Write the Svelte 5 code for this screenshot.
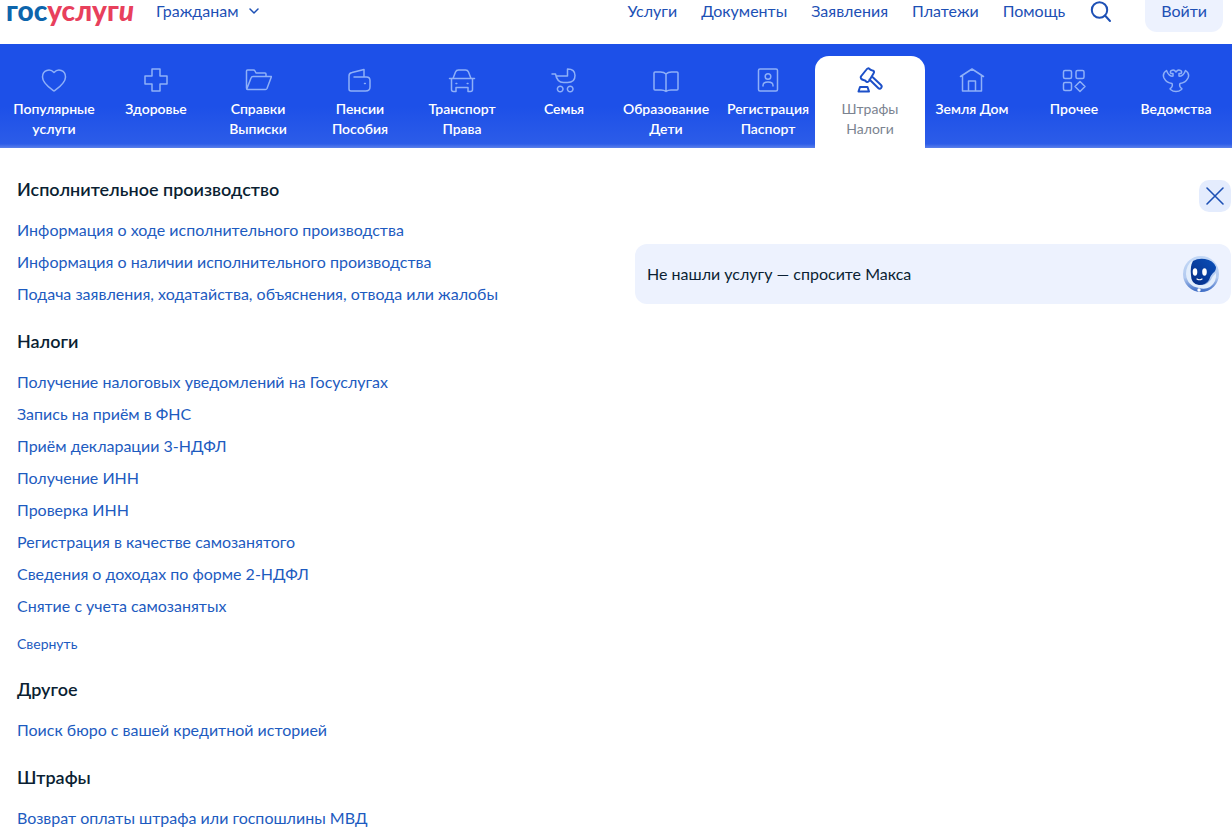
<script>
  const topLinks = ['Услуги', 'Документы', 'Заявления', 'Платежи', 'Помощь'];

  const categories = [
    { icon: 'heart', lines: ['Популярные', 'услуги'] },
    { icon: 'cross', lines: ['Здоровье'] },
    { icon: 'folder', lines: ['Справки', 'Выписки'] },
    { icon: 'wallet', lines: ['Пенсии', 'Пособия'] },
    { icon: 'car', lines: ['Транспорт', 'Права'] },
    { icon: 'stroller', lines: ['Семья'] },
    { icon: 'book', lines: ['Образование', 'Дети'] },
    { icon: 'passport', lines: ['Регистрация', 'Паспорт'] },
    { icon: 'gavel', lines: ['Штрафы', 'Налоги'] },
    { icon: 'house', lines: ['Земля Дом'] },
    { icon: 'grid', lines: ['Прочее'] },
    { icon: 'eagle', lines: ['Ведомства'] }
  ];

  const icons = {
    heart: 'M14 25C10 22 2.500 17.500 2.500 11C2.500 4 10 2 14 6.500C18 2 25.500 4 25.500 11C25.500 17.500 18 22 14 25Z',
    cross: 'M10 3h8v7h7v8h-7v7h-8v-7H3v-8h7z',
    folder: 'M2.500 22V5q0-1 1-1h6q1 0 1.500 1l1 2h9q1 0 1 1V10.500M3 22.500L7 12q.5-1.500 2-1.500h18.500l-4.500 12q-.5 1-1.500 1H3.500q-1 0-1-1.500',
    wallet: 'M3 10v13q0 2 2 2h14.500Q24 25 24 21v-6.500Q24 11 20.500 11H8M3 10q0-3 3-3.500L18 3.500v7M18.500 17.500h.8',
    car: 'M5 12.500L7.500 6q.8-2 3-2h7q2.200 0 3 2l2.500 6.500M1.500 12.500h25M3.500 12.500v11q0 2 2 2h2.500v-4h12v4h2.500q2 0 2-2v-11M8 17.500h.8M19.200 17.500h.8',
    stroller: 'M2 8h3.500q1.500 8.500 8 8.500h4q7.500 0 7.500-7q0-6.500-7.500-6.500v7H6M13 23a2.800 2.800 0 1 1-5.600 0a2.800 2.800 0 1 1 5.600 0M23 23a2.800 2.800 0 1 1-5.600 0a2.800 2.800 0 1 1 5.600 0',
    book: 'M14 8Q12 6 8.500 6H3Q2 6 2 7v16q0 1 1 1h6q3 0 5 1.500Q16 24 19 24h6q1 0 1-1V7q0-1-1-1h-5.500Q16 6 14 8v17.500',
    passport: 'M6 3h16q1.500 0 1.500 1.500v19q0 1.500-1.500 1.500H6q-1.500 0-1.500-1.500v-19Q4.500 3 6 3zM16.800 10.500a2.800 2.800 0 1 1-5.600 0a2.800 2.800 0 1 1 5.600 0M9 20v-.5q0-3.500 5-3.500t5 3.500v.5',
    gavel: 'M10.500 3.500q1.500-2 3-.5q1 1 3 1.500q2.500.5 1 3L13 15q-1 1.500-2.500.8Q9.500 14.500 7.500 14q-1.500-.3-2.500-1.500q-.8-1.300.3-2.500zM16 10.500l9 8.500q1.300 1.200.2 2.800q-1.500 1.700-3 .2L13.500 13.500M4 21h7.500l1.500 4.500H2.500z',
    house: 'M2.500 10.500L14 3l11.500 7.500M4.500 9.500v15.500h19V9.500M10.500 25V15h7v10',
    grid: 'M5 4.500h5q1.500 0 1.500 1.500v5q0 1.500-1.500 1.500H5q-1.500 0-1.500-1.500V6q0-1.500 1.500-1.500zM17.500 4.500h5q1.500 0 1.500 1.500v5q0 1.500-1.500 1.500h-5q-1.500 0-1.500-1.500V6q0-1.500 1.500-1.500zM5 16.500h5q1.500 0 1.500 1.500v5q0 1.500-1.500 1.500H5q-1.500 0-1.500-1.500v-5q0-1.500 1.500-1.500zM20 15.500l5 5l-5 5l-5-5z',
    eagle: 'M14 6q2-3 4.500-1.500q2 1 .5 3h-2v2.500q4 1 6.500-5.500q4.500 3 2.500 7.500q-2.500 5-8 5.500q-1 3 1 4.500q1.500.5.500 1.500Q17 25.500 14 25.500T8.500 23.500q-1-1 .5-1.500q2-1.500 1-4.500Q4.500 17 2 12q-2-4.500 2.500-7.500Q7 11 11 10V7.500H9q-1.500-2 .5-3Q12 3 14 6z'
  };

  const sections = [
    {
      title: 'Исполнительное производство',
      links: [
        'Информация о ходе исполнительного производства',
        'Информация о наличии исполнительного производства',
        'Подача заявления, ходатайства, объяснения, отвода или жалобы'
      ]
    },
    {
      title: 'Налоги',
      links: [
        'Получение налоговых уведомлений на Госуслугах',
        'Запись на приём в ФНС',
        'Приём декларации 3-НДФЛ',
        'Получение ИНН',
        'Проверка ИНН',
        'Регистрация в качестве самозанятого',
        'Сведения о доходах по форме 2-НДФЛ',
        'Снятие с учета самозанятых'
      ],
      collapsible: true
    },
    { title: 'Другое', links: ['Поиск бюро с вашей кредитной историей'] },
    { title: 'Штрафы', links: ['Возврат оплаты штрафа или госпошлины МВД'] }
  ];

  let active = $state('gavel');
</script>

<header>
  <a class="logo" href="#home"><span>гос</span>услуг<i>и</i></a>
  <button class="audience">
    Гражданам
    <svg width="12" height="12" viewBox="0 0 12 12"><path d="M2 4l4 4 4-4" /></svg>
  </button>
  <nav class="top-links">
    {#each topLinks as link}
      <a href="#top">{link}</a>
    {/each}
  </nav>
  <button class="search" aria-label="Поиск">
    <svg width="24" height="24" viewBox="0 0 24 24"><circle cx="10.500" cy="10" r="7.700" /><path d="M16 15.500l5 5.500" /></svg>
  </button>
  <button class="login">Войти</button>
</header>

<nav class="categories">
  {#each categories as item}
    <button class="category" class:active={active === item.icon} onclick={() => (active = item.icon)}>
      <svg width="28" height="28" viewBox="0 0 28 28"><path d={icons[item.icon]} /></svg>
      {#each item.lines as line}
        <span>{line}</span>
      {/each}
    </button>
  {/each}
</nav>

<main>
  <div class="services">
    {#each sections as section}
      <section>
        <h2>{section.title}</h2>
        <ul>
          {#each section.links as link}
            <li><a href="#service">{link}</a></li>
          {/each}
        </ul>
        {#if section.collapsible}
          <button class="collapse">Свернуть</button>
        {/if}
      </section>
    {/each}
  </div>

  <aside>
    <button class="close" aria-label="Закрыть">
      <svg width="20" height="20" viewBox="0 0 20 20"><path d="M2 2l16 16M18 2L2 18" /></svg>
    </button>
    <a class="assistant" href="#max">
      Не нашли услугу — спросите Макса
      <svg width="36" height="36" viewBox="0 0 36 36">
        <defs>
          <linearGradient id="shell" x1="0" y1="0" x2="0" y2="1">
            <stop offset="0" stop-color="#c3d8f6" />
            <stop offset="0.6" stop-color="#b4cbf0" />
            <stop offset="1" stop-color="#3868c4" />
          </linearGradient>
          <linearGradient id="face" x1="0" y1="1" x2="1" y2="0">
            <stop offset="0" stop-color="#052c84" />
            <stop offset="1" stop-color="#0a50bb" />
          </linearGradient>
        </defs>
        <circle cx="18" cy="18" r="18" fill="url(#shell)" />
        <path d="M3 18Q3 9 10 4Q7 12 8 20Q9 28 18 29Q26 29 30 20L33 17Q34 26 27 31Q22 34 16 32Q4 30 3 18z" fill="#e3eefc" />
        <path d="M10 5Q15 2 22 3Q30 4 33 11Q33 15 30 17Q27 20 26 24Q23 29 16 29Q8 28 8 19Q7 10 10 5z" fill="url(#face)" />
        <ellipse cx="12" cy="16" rx="2.300" ry="3.700" fill="#fff" />
        <ellipse cx="21.500" cy="16" rx="2.300" ry="3.700" fill="#fff" />
        <path d="M14 23q2.500 1.500 5 0" fill="none" stroke="#fff" stroke-width="1.200" />
        <circle cx="16" cy="34" r="1.700" fill="#fff" />
      </svg>
    </a>
  </aside>
</main>

<style>
  :global(body) {
    margin: 0;
    background: #fff;
    color: #0b1f33;
    font-family: Lato, "Open Sans", sans-serif;
    font-size: 16px;
    line-height: 24px;
  }

  a {
    color: #1d5bc0;
    text-decoration: none;
  }

  button {
    padding: 0;
    border: none;
    background: none;
    color: #1d50b5;
    font: inherit;
    cursor: pointer;
  }

  svg {
    flex: none;
    stroke-linecap: round;
    stroke-linejoin: round;
  }

  header {
    display: flex;
    align-items: flex-start;
    height: 44px;
    padding: 0 9px 0 6px;
    box-sizing: border-box;
    line-height: 22px;
  }

  header a {
    color: #1d50b5;
  }

  header svg {
    fill: none;
    stroke: #1d50b5;
    stroke-width: 2;
  }

  header .logo {
    color: #e8405c;
    font-size: 28px;
    font-weight: 900;
    line-height: 20px;
  }

  .logo span {
    color: #0d65ac;
  }

  .audience {
    display: flex;
    align-items: center;
    gap: 10px;
    margin-left: 22px;
  }

  .audience svg {
    stroke-width: 1.500;
  }

  .top-links {
    display: flex;
    gap: 24px;
    margin-left: auto;
  }

  .search {
    height: 24px;
    margin: 0 32px 0 24px;
  }

  .search svg {
    display: block;
  }

  .login {
    padding: 0 16px 10px;
    border-radius: 0 0 12px 12px;
    background: #edf2fe;
  }

  .categories {
    display: flex;
    height: 104px;
    padding: 12px 5px 0 3px;
    box-sizing: border-box;
    background: linear-gradient(#1d50e8 60%, #2c5ce8 96%, #5b80ea);
  }

  .category {
    display: flex;
    flex: 1 1 0;
    flex-direction: column;
    align-items: center;
    min-width: 0;
    padding-top: 10px;
    color: #fff;
    font-size: 14px;
    font-weight: 600;
    line-height: 20px;
    white-space: nowrap;
  }

  .category svg {
    margin-bottom: 5px;
    fill: none;
    stroke: #8fb0f8;
    stroke-width: 1.500;
  }

  .category.active {
    margin: 0 -4px;
    padding: 10px 4px 0;
    border-radius: 14px 14px 0 0;
    background: #fff;
    color: #7b8390;
    font-weight: 400;
  }

  .category.active svg {
    stroke: #1d50c8;
    stroke-width: 2;
  }

  main {
    display: grid;
    grid-template-columns: 1fr 1fr;
    gap: 22px;
    padding: 30px 1px 0 17px;
  }

  .services {
    display: flex;
    flex-direction: column;
    gap: 24px;
  }

  h2 {
    margin: 0 0 18px;
    font-size: 18px;
    font-weight: 600;
    line-height: 22px;
  }

  ul {
    display: flex;
    flex-direction: column;
    gap: 8px;
    margin: 0;
    padding: 0;
    list-style: none;
  }

  .collapse {
    display: block;
    margin-top: 16px;
    color: #1d5bc0;
    font-size: 14px;
    line-height: 20px;
  }

  aside {
    display: flex;
    flex-direction: column;
    align-items: flex-end;
    gap: 32px;
    padding-top: 2px;
  }

  .close {
    display: flex;
    align-items: center;
    justify-content: center;
    width: 32px;
    height: 32px;
    border-radius: 10px;
    background: #e4ecfd;
  }

  .close svg {
    stroke: #1d50b5;
    stroke-width: 1.600;
  }

  .assistant {
    display: flex;
    align-items: center;
    justify-content: space-between;
    width: 100%;
    height: 60px;
    padding: 0 12px;
    border-radius: 12px;
    box-sizing: border-box;
    background: #edf2fe;
    color: #0b1f33;
  }
</style>
